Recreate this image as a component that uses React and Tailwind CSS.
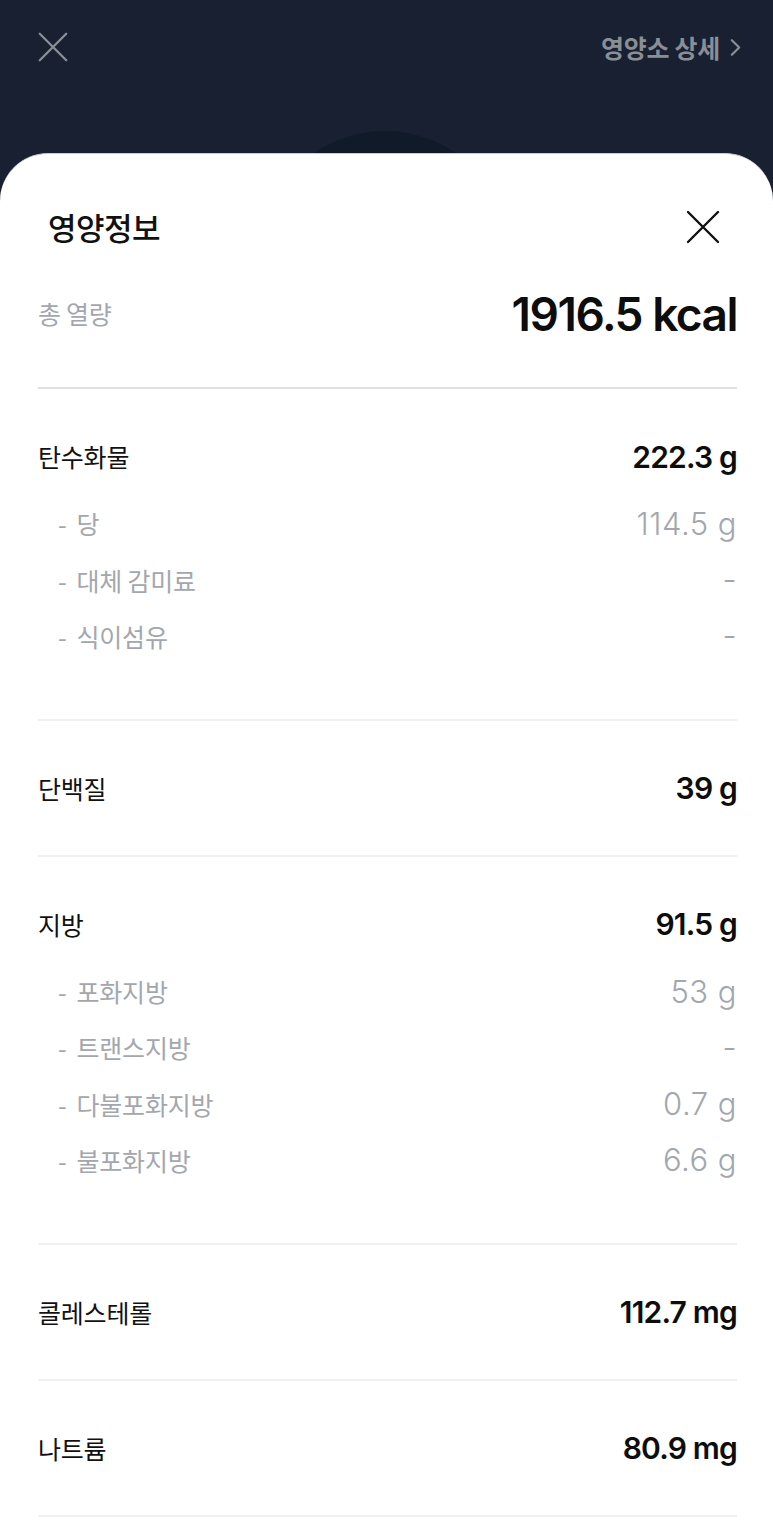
import React from 'react';

const ko = { fontFamily: '"Noto Sans CJK KR", "Noto Sans", sans-serif' };
const num = { fontFamily: 'Inter, "Noto Sans CJK KR", sans-serif' };

const sections = [
    { label: '탄수화물', value: '222.3 g', subs: [['당', '114.5 g'], ['대체 감미료', '-'], ['식이섬유', '-']] },
    { label: '단백질', value: '39 g', subs: [] },
    { label: '지방', value: '91.5 g', subs: [['포화지방', '53 g'], ['트랜스지방', '-'], ['다불포화지방', '0.7 g'], ['불포화지방', '6.6 g']] },
    { label: '콜레스테롤', value: '112.7 mg', subs: [] },
    { label: '나트륨', value: '80.9 mg', subs: [] },
];

const XIcon = ({ className, stroke = 2 }) => (
    <svg viewBox="0 0 34 34" className={className} fill="none" stroke="currentColor" strokeWidth={stroke} strokeLinecap="round">
        <path d="M2 2 L32 32 M32 2 L2 32" />
    </svg>
);

const App = () => {
    return (
        <div className="relative min-h-[1529px] w-full bg-[#182031] flex flex-col overflow-hidden" style={ko}>
            {/* dark blob peeking out behind the sheet */}
            <div className="absolute left-[260px] top-[131px] w-[250px] h-[250px] rounded-full bg-[#111a28]" />

            {/* top bar */}
            <div className="relative h-[153px] flex items-start justify-between pl-[38px] pr-[32px] pt-[32px]">
                <XIcon className="w-[30px] h-[30px] text-[#8a8e95]" stroke={2.6} />
                <div className="flex items-center gap-[10px] text-[25px] font-bold text-[#8a8e95] leading-[30px] tracking-[-0.3px]">
                    <span>영양소 상세</span>
                    <svg viewBox="0 0 12 20" className="w-[11px] h-[19px]" fill="none" stroke="currentColor" strokeWidth="2.4" strokeLinecap="round" strokeLinejoin="round">
                        <path d="M2 2 L10 10 L2 18" />
                    </svg>
                </div>
            </div>

            {/* sheet */}
            <div className="relative flex-1 bg-white rounded-t-[48px] border-t border-[#c9ccd2] pb-[14px]">
                <div className="flex items-center justify-between h-[56px] mt-[45px] pl-[48px] pr-[53px]">
                    <h1 className="text-[31px] font-medium text-[#111111] tracking-[-0.5px]">영양정보</h1>
                    <XIcon className="w-[34px] h-[34px] text-[#111111]" stroke={2.4} />
                </div>

                <div className="pr-[36px] pl-[38px]">
                    <div className="flex items-center justify-between h-[56px] mt-[31px] mb-[45px]">
                        <span className="text-[25px] text-[#a3a7ad] tracking-[-0.3px]">총 열량</span>
                        <span className="text-[46px] font-semibold text-[#0d0d0d] tracking-[-1.5px]" style={num}>1916.5 kcal</span>
                    </div>
                    <div className="h-[2px] bg-[#dde0e4]" />

                    {sections.map((s) => (
                        <div key={s.label} className="border-b-2 border-[#eef0f2] pt-[40px] pb-[38px]">
                            <div className="flex items-center justify-between h-[56px]">
                                <span className="text-[25px] text-[#111111] tracking-[-0.2px]">{s.label}</span>
                                <span className="text-[30px] font-semibold text-[#0d0d0d] tracking-[-0.8px]" style={num}>{s.value}</span>
                            </div>
                            {s.subs.length > 0 && (
                                <div className="mt-[11px] mb-[16px]">
                                    {s.subs.map(([n, v]) => (
                                        <div key={n} className="flex items-center justify-between h-[56.25px] pl-[20px]">
                                            <span className="text-[25px] text-[#a3a7ad] tracking-[-0.2px]">
                                                <span className="mr-[10px]">-</span>{n}
                                            </span>
                                            <span className="text-[31px] font-light text-[#a3a7ad] tracking-[0.5px]" style={num}>{v}</span>
                                        </div>
                                    ))}
                                </div>
                            )}
                        </div>
                    ))}
                </div>
            </div>
        </div>
    );
};

export default App;
